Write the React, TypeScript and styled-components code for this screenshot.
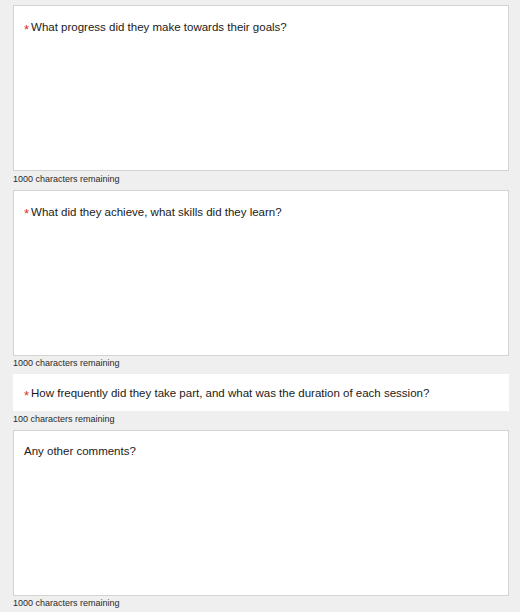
import React, { ReactElement } from 'react';
import styled, { createGlobalStyle } from 'styled-components';

const GlobalStyle = createGlobalStyle`
  html, body {
    margin: 0;
    padding: 0;
    background: #efefef;
  }
  body {
    font-family: "Liberation Sans", Arial, sans-serif;
    color: #222;
  }
`;

const Form = styled.form`
  display: flex;
  flex-direction: column;
  gap: 4.5px;
  padding: 5px 11px 0 13px;
`;

const Field = styled.div`
  display: flex;
  flex-direction: column;
`;

const Box = styled.div<{ $tall: boolean }>`
  box-sizing: border-box;
  width: 496px;
  height: ${({ $tall }) => ($tall ? '166px' : '37px')};
  background: #fff;
  border: ${({ $tall }) => ($tall ? '1px solid #d3d3d3' : 'none')};
  padding: ${({ $tall }) => ($tall ? '13px 10px 0' : '11px 11px 0')};
`;

const Question = styled.label`
  display: flex;
  align-items: baseline;
  font-size: 11.5px;
  line-height: 15px;
  color: #1a1a1a;
`;

const Required = styled.span`
  color: #d8322b;
  font-size: 13px;
  line-height: 15px;
  margin-right: 2px;
  position: relative;
  top: 2.5px;
`;

const Counter = styled.div`
  font-size: 9px;
  line-height: 12.5px;
  padding-top: 1.5px;
  color: #2a2a2a;
`;

const fields = [
  { q: 'What progress did they make towards their goals?', required: true, tall: true, max: 1000 },
  { q: 'What did they achieve, what skills did they learn?', required: true, tall: true, max: 1000 },
  {
    q: 'How frequently did they take part, and what was the duration of each session?',
    required: true,
    tall: false,
    max: 100,
  },
  { q: 'Any other comments?', required: false, tall: true, max: 1000 },
];

export default function App(): ReactElement {
  return (
    <>
      <GlobalStyle />
      <Form>
        {fields.map((f) => (
          <Field key={f.q}>
            <Box $tall={f.tall}>
              <Question>
                {f.required && <Required>*</Required>}
                {f.q}
              </Question>
            </Box>
            <Counter>{f.max} characters remaining</Counter>
          </Field>
        ))}
      </Form>
    </>
  );
}
